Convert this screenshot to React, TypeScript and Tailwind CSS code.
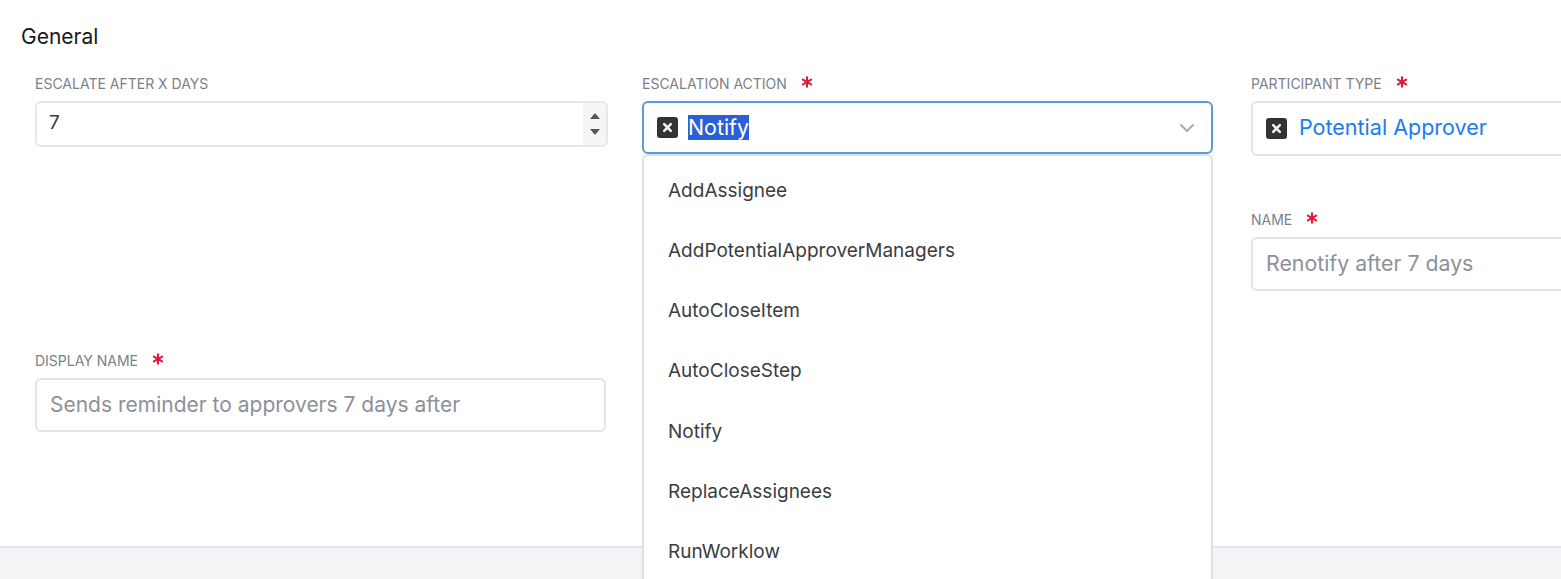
import React from "react";

const font = "[font-family:Inter,'Liberation_Sans',sans-serif]";

function Star() {
  return (
    <svg width="12" height="12" viewBox="0 0 12 12" className="ml-[14px] -mt-[3px] shrink-0">
      <g stroke="#e0193f" strokeWidth="2.1" strokeLinecap="round">
        <path d="M6 1.2V10.8" />
        <path d="M1.9 3.6L10.1 8.4" />
        <path d="M10.1 3.6L1.9 8.4" />
      </g>
    </svg>
  );
}

function Label({ text, required }: { text: string; required?: boolean }) {
  return (
    <div className="flex items-center h-[18px] text-[14px] leading-[18px] text-[#7c7f86]">
      <span className="pt-[1px]">{text}</span>
      {required && <Star />}
    </div>
  );
}

function ClearBox() {
  return (
    <span className="w-[21px] h-[21px] rounded-[3px] bg-[#333333] flex items-center justify-center shrink-0">
      <svg width="11" height="11" viewBox="0 0 11 11">
        <path d="M2.2 2.2L8.8 8.8M8.8 2.2L2.2 8.8" stroke="#f2f2f2" strokeWidth="2.6" strokeLinecap="round" />
      </svg>
    </span>
  );
}

const items = [
  "AddAssignee",
  "AddPotentialApproverManagers",
  "AutoCloseItem",
  "AutoCloseStep",
  "Notify",
  "ReplaceAssignees",
  "RunWorklow",
];

export default function App() {
  return (
    <div className={`${font} w-[1561px] h-[579px] overflow-hidden bg-white flex flex-col`}>
      <div className="h-[546px] shrink-0 pt-[25px] pl-[21px]">
        <h2 className="text-[21px] leading-[24px] font-normal text-[#16181d]">General</h2>
        <div className="flex mt-[25px] ml-[14px]">
          {/* Column 1 */}
          <div className="w-[573px] shrink-0 flex flex-col">
            <Label text="ESCALATE AFTER X DAYS" />
            <div className="mt-[9px] h-[46px] border-2 border-[#e6e7ea] rounded-[6px] flex items-stretch justify-between overflow-hidden">
              <span className="pl-[12px] pb-[2px] self-center text-[19px] text-[#35383d]">7</span>
              <div className="w-[23px] bg-[#f5f5f5] flex flex-col items-center justify-center gap-[10px]">
                <svg width="10" height="6" viewBox="0 0 10 6"><path d="M5 0L10 6H0Z" fill="#55585c" /></svg>
                <svg width="10" height="6" viewBox="0 0 10 6"><path d="M5 6L0 0H10Z" fill="#55585c" /></svg>
              </div>
            </div>
            <div className="mt-[204px] mr-[2px]">
              <Label text="DISPLAY NAME" required />
              <div className="mt-[9px] h-[54px] border-2 border-[#e3e4e7] rounded-[6px] flex items-center pl-[13px] text-[21px] text-[#8c9199]">
                Sends reminder to approvers 7 days after
              </div>
            </div>
          </div>

          {/* Column 2 */}
          <div className="relative w-[571px] shrink-0 ml-[34px]">
            <Label text="ESCALATION ACTION" required />
            <div className="mt-[9px] h-[53px] border-2 border-[#5b9bd5] rounded-[6px] flex items-center pl-[13px] pr-[16px]">
              <ClearBox />
              <span className="ml-[10px] bg-[#2a5fd8] text-white text-[21.4px] leading-[25px]">Notify</span>
              <svg width="16" height="10" viewBox="0 0 16 10" className="ml-auto">
                <path d="M2 2L8 8L14 2" fill="none" stroke="#a9abaf" strokeWidth="2" strokeLinecap="round" strokeLinejoin="round" />
              </svg>
            </div>
            <div className="absolute left-0 right-0 top-[80px] h-[440px] bg-white border-2 border-b-0 border-[#dfe0e3] rounded-t-[6px] pt-[5px] pl-[24px] text-[19px] text-[#3a3d42]">
              {items.map((t) => (
                <div key={t} className="h-[60.2px] flex items-center">{t}</div>
              ))}
            </div>
          </div>

          {/* Column 3 */}
          <div className="w-[570px] shrink-0 ml-[38px]">
            <Label text="PARTICIPANT TYPE" required />
            <div className="mt-[9px] h-[55px] border-2 border-[#e3e4e7] rounded-[6px] flex items-center pl-[13px]">
              <ClearBox />
              <span className="ml-[12px] pb-[2px] text-[21.5px] text-[#1a7cf0]">Potential Approver</span>
            </div>
            <div className="mt-[54px]">
              <Label text="NAME" required />
              <div className="mt-[9px] h-[54px] border-2 border-[#e3e4e7] rounded-[6px] flex items-center pl-[13px] text-[21.3px] text-[#8c9199]">
                Renotify after 7 days
              </div>
            </div>
          </div>
        </div>
      </div>
      <div className="flex-1 bg-[#f3f4f6] border-t-2 border-[#e2e5ee]" />
    </div>
  );
}
